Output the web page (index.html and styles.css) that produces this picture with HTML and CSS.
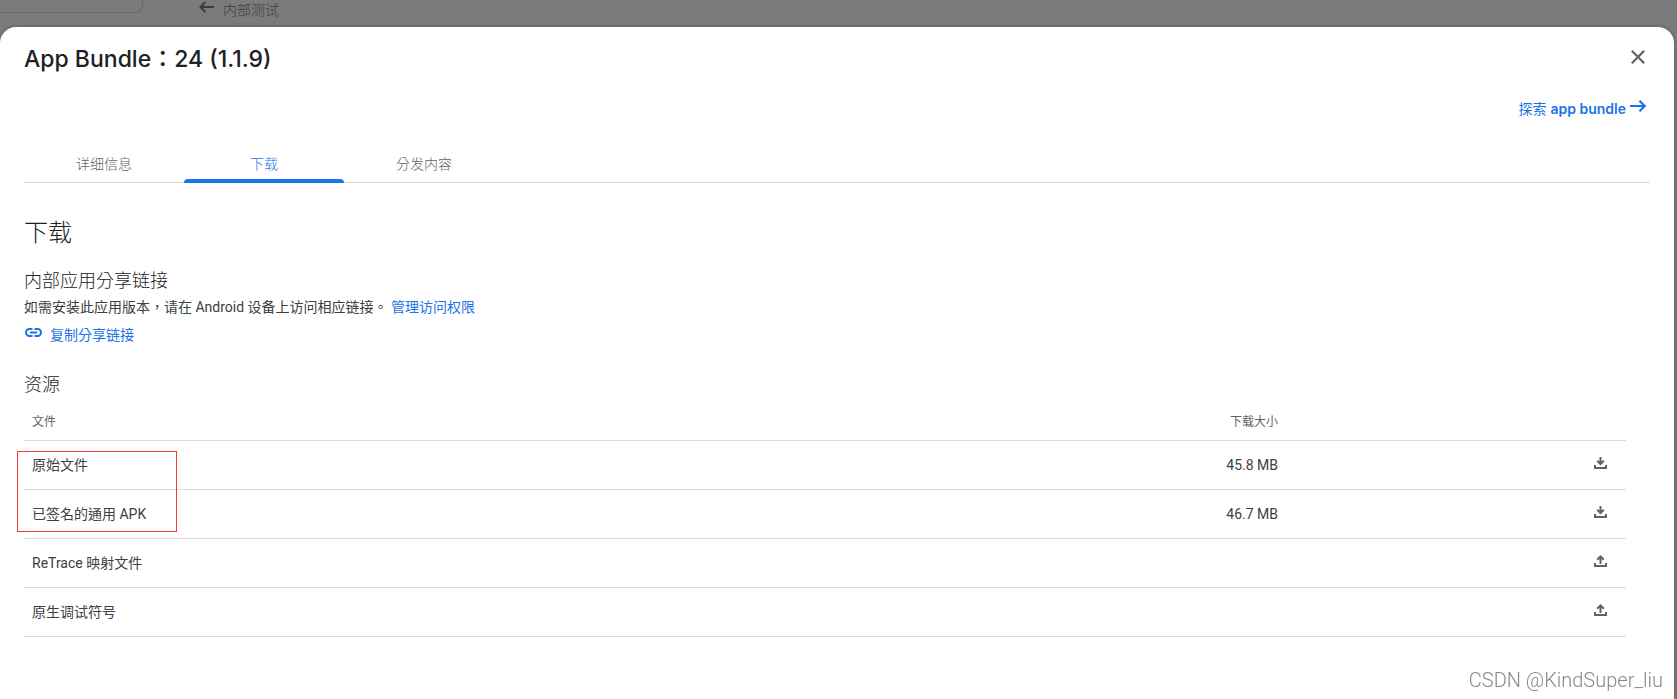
FILE: index.html
```
<!DOCTYPE html>
<html lang="zh-Hant">
<head>
	<meta charset="utf-8">
	<title>App Bundle</title>
	<link rel="stylesheet" href="styles.css">
</head>
<body>
	<div class="topbar">
		<div class="search"></div>
		<a class="back" href="#">
			<svg width="16" height="12" viewBox="0 0 16 12"><path d="M6.500 1L1.500 6l5 5M1.500 6H15" fill="none" stroke="currentColor" stroke-width="2"/></svg>
			<span>内部测试</span>
		</a>
	</div>
	<main class="dialog">
		<header class="head">
			<h1>App Bundle：24 (1.1.9)</h1>
			<button class="close" type="button" aria-label="关闭">
				<svg width="14" height="14" viewBox="0 0 14 14"><path d="M.8.8l12.400 12.400M13.200.8L.8 13.200" fill="none" stroke="currentColor" stroke-width="2.200"/></svg>
			</button>
		</header>
		<div class="explore">
			<a href="#">探索 <b>app bundle</b>
				<svg width="16" height="12" viewBox="0 0 16 12"><path d="M9.500.8L14.700 6l-5.200 5.200M14.500 6H0" fill="none" stroke="currentColor" stroke-width="2.200"/></svg>
			</a>
		</div>
		<nav class="tabs">
			<button type="button">详细信息</button>
			<button type="button" class="on">下载</button>
			<button type="button">分发内容</button>
		</nav>
		<h2>下载</h2>
		<h3>内部应用分享链接</h3>
		<p class="desc">如需安装此应用版本，请在 Android 设备上访问相应链接。 <a href="#">管理访问权限</a></p>
		<a class="copy" href="#">
			<svg width="17" height="9" viewBox="0 0 17 9"><path d="M7.500 1h-3a3.500 3.500 0 0 0 0 7h3M9.500 1h3a3.500 3.500 0 0 1 0 7h-3M5 4.500h7" fill="none" stroke="currentColor" stroke-width="2"/></svg>
			<span>复制分享链接</span>
		</a>
		<h3 class="res">资源</h3>
		<div class="files">
			<table>
				<thead>
					<tr><th>文件</th><th class="size">下载大小</th><th class="act"></th></tr>
				</thead>
				<tbody>
					<tr>
						<td>原始文件</td>
						<td class="size">45.8 MB</td>
						<td class="act"><button type="button" aria-label="下载"><svg width="13" height="12" viewBox="0 0 13 12"><path d="M6.500 0v7M3.200 3.700l3.300 3.300 3.300-3.300M1 8v3h11V8" fill="none" stroke="currentColor" stroke-width="2"/></svg></button></td>
					</tr>
					<tr>
						<td>已签名的通用 APK</td>
						<td class="size">46.7 MB</td>
						<td class="act"><button type="button" aria-label="下载"><svg width="13" height="12" viewBox="0 0 13 12"><path d="M6.500 0v7M3.200 3.700l3.300 3.300 3.300-3.300M1 8v3h11V8" fill="none" stroke="currentColor" stroke-width="2"/></svg></button></td>
					</tr>
					<tr>
						<td>ReTrace 映射文件</td>
						<td class="size"></td>
						<td class="act"><button type="button" aria-label="上传"><svg width="13" height="12" viewBox="0 0 13 12"><path d="M6.500 9V2M3.200 4.700l3.300-3.300 3.300 3.300M1 8v3h11V8" fill="none" stroke="currentColor" stroke-width="2"/></svg></button></td>
					</tr>
					<tr>
						<td>原生调试符号</td>
						<td class="size"></td>
						<td class="act"><button type="button" aria-label="上传"><svg width="13" height="12" viewBox="0 0 13 12"><path d="M6.500 9V2M3.200 4.700l3.300-3.300 3.300 3.300M1 8v3h11V8" fill="none" stroke="currentColor" stroke-width="2"/></svg></button></td>
					</tr>
				</tbody>
			</table>
			<div class="mark"></div>
		</div>
	</main>
	<div class="watermark">CSDN @KindSuper_liu</div>
</body>
</html>
```
FILE: styles.css
```
*{
	margin: 0;
	padding: 0;
	box-sizing: border-box;
}
body{
	display: flex;
	flex-direction: column;
	min-height: 100vh;
	background: #7a7b7c;
	color: #202124;
	font: 14px/20px Roboto, "Noto Sans CJK TC", sans-serif;
}
a{
	color: #1a73e8;
	text-decoration: none;
}
button{
	border: 0;
	background: none;
	font: inherit;
	color: #5f6368;
	cursor: pointer;
}
svg{
	display: block;
}
.topbar{
	display: flex;
	height: 27px;
}
.search{
	width: 143px;
	height: 13px;
	border: 1px solid #68696b;
	border-width: 0 1px 1px 0;
	border-radius: 0 0 8px 0;
}
.back{
	display: flex;
	gap: 8px;
	margin-left: 56px;
	color: #3a3b3d;
	font-weight: 300;
}
.back svg{
	margin-top: 1px;
}
.dialog{
	flex: 1;
	margin-right: 3px;
	padding: 18px 24px 40px;
	background: #fff;
	border-radius: 16px 16px 0 0;
	box-shadow: 0 0 4px rgba(0,0,0,.3);
}
.head{
	display: flex;
	justify-content: space-between;
}
h1{
	font: 500 23px/28px Inter, "Noto Sans CJK TC", sans-serif;
}
.close{
	width: 24px;
	height: 24px;
	padding: 4px 5px;
}
.explore{
	display: flex;
	justify-content: flex-end;
	margin-top: 26px;
	padding-right: 4px;
}
.explore a{
	display: flex;
	gap: 4px;
}
.explore b{
	font: 600 14px/20px Inter, sans-serif;
}
.explore svg{
	margin-top: 1px;
}
.tabs{
	display: flex;
	height: 40px;
	margin-top: 24px;
	border-bottom: 1px solid #dadce0;
}
.tabs button{
	position: relative;
	width: 160px;
	padding-top: 2px;
	font-weight: 300;
}
.tabs .on{
	color: #1a73e8;
}
.tabs .on::after{
	content: "";
	position: absolute;
	left: 0;
	right: 0;
	bottom: -1px;
	height: 4px;
	border-radius: 4px 4px 0 0;
	background: #1a73e8;
}
h2{
	margin-top: 34px;
	font-size: 24px;
	font-weight: 300;
	line-height: 32px;
}
h3{
	margin-top: 20px;
	font-size: 18px;
	font-weight: 300;
	line-height: 24px;
}
.desc{
	line-height: 24px;
	margin-top: 2px;
	color: #3c4043;
}
.copy{
	display: flex;
	gap: 8px;
	width: max-content;
	margin-top: 6px;
	padding-left: 1px;
}
.copy svg{
	margin-top: 3px;
}
.res{
	margin-top: 28px;
}
.files{
	position: relative;
	margin: 7px 24px 0 0;
}
table{
	width: 100%;
	table-layout: fixed;
	border-collapse: collapse;
}
th, td{
	height: 49px;
	padding: 0 8px;
	border-bottom: 1px solid #dadce0;
	text-align: left;
	color: #3c4043;
}
th{
	height: 36px;
	font-size: 12px;
	font-weight: 400;
	color: #5f6368;
}
.size{
	width: 260px;
	text-align: right;
}
.act{
	width: 340px;
	padding-right: 19px;
}
.act button{
	display: block;
	margin: -4px 0 0 auto;
}
/* red frame over the first two files */
.mark{
	position: absolute;
	left: -7px;
	top: 47px;
	width: 160px;
	height: 81px;
	border: 1px solid #f03a3a;
}
.watermark{
	position: fixed;
	right: 14px;
	bottom: 7px;
	font: 300 20px/24px Roboto, sans-serif;
	color: #888;
}
```
